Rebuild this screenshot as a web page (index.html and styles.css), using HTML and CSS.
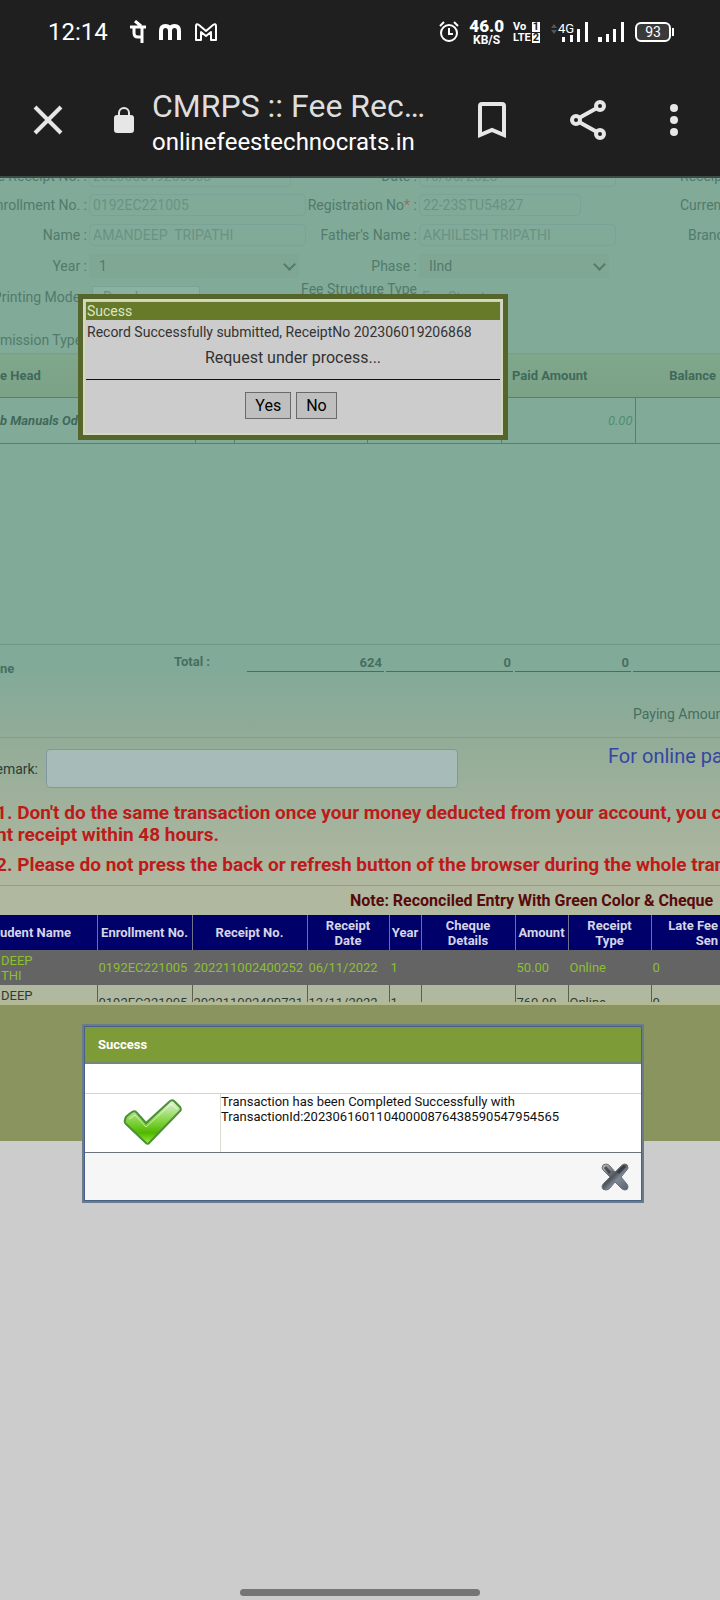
FILE: index.html
```
<!DOCTYPE html>
<html lang="en">
<head>
    <meta charset="UTF-8">
    <meta name="viewport" content="width=device-width, initial-scale=1.0">
    <title>CMRPS :: Fee Receipt</title>
    <link rel="stylesheet" href="styles.css">
</head>
<body>
<header class="browser">
    <div class="status">
        <span class="status__time">12:14</span>
        <svg class="status__app" width="16" height="24" viewBox="0 0 16 24" fill="none" stroke="#fff" stroke-width="3">
            <path d="M0 7h16M5 1l6 5M4 7v6q0 4 4 4h3M12 7v16"/>
        </svg>
        <svg class="status__app" width="24" height="24" viewBox="0 0 24 24" fill="none" stroke="#fff" stroke-width="4">
            <path d="M3 20v-9q0-5 4.500-5T12 11v9M12 11q0-5 4.500-5t4.500 5v9"/>
        </svg>
        <svg class="status__app" width="24" height="24" viewBox="0 0 24 24" fill="none" stroke="#fff" stroke-width="2" stroke-linejoin="round">
            <path d="M2 20V6q0-3 3-1l7 6 7-6q3-2 3 1v14h-5v-8l-5 4-5-4v8z"/>
        </svg>
        <div class="status__right">
            <svg width="22" height="24" viewBox="0 0 22 24" fill="none" stroke="#fff" stroke-width="2">
                <circle cx="11" cy="13" r="8"/>
                <path d="M11 8v6h4M2 6l4-4M20 6l-4-4"/>
            </svg>
            <div class="speed"><b>46.0</b><span>KB/S</span></div>
            <div class="volte">
                <span>Vo</span><i>1</i>
                <span>LTE</span><i>2</i>
            </div>
            <svg width="40" height="24" viewBox="0 0 40 24" fill="#fff">
                <path d="M2 8l3-4 3 4zM2 10l3 4 3-4z" fill="#555"/>
                <text x="9" y="13" class="svg-4g">4G</text>
                <path d="M13 17h3v5h-3zM21 15h3v7h-3zM28 9h3v13h-3zM36 2h3v20h-3z"/>
            </svg>
            <svg width="28" height="24" viewBox="0 0 28 24" fill="#fff">
                <path d="M0 17h4v5h-4zM8 14h3v8h-3zM15 9h3v13h-3zM23 2h3v20h-3z"/>
            </svg>
            <div class="battery">93</div>
        </div>
    </div>
    <div class="toolbar">
        <button type="button" class="icon-btn" aria-label="Close">
            <svg width="30" height="30" viewBox="0 0 30 30" stroke="#e6e6e6" stroke-width="4"><path d="M2 2l26 26M28 2L2 28"/></svg>
        </button>
        <svg class="toolbar__lock" width="20" height="28" viewBox="0 0 20 28">
            <rect y="9" width="20" height="18" rx="3" fill="#e6e6e6"/>
            <path d="M5 10V7a5 5 0 0 1 10 0v3" fill="none" stroke="#e6e6e6" stroke-width="2"/>
        </svg>
        <div class="toolbar__text">
            <div class="toolbar__title">CMRPS :: Fee Rec…</div>
            <div class="toolbar__url">onlinefeestechnocrats.in</div>
        </div>
        <button type="button" class="icon-btn" aria-label="Bookmark">
            <svg width="28" height="36" viewBox="0 0 28 36" fill="none" stroke="#e6e6e6" stroke-width="4"><path d="M2 33V4q0-2 2-2h20q2 0 2 2v29l-12-5z"/></svg>
        </button>
        <button type="button" class="icon-btn" aria-label="Share">
            <svg width="36" height="40" viewBox="0 0 36 40" fill="none" stroke="#e6e6e6" stroke-width="4">
                <path d="M9 18l18-10M9 22l18 10"/>
                <circle cx="6" cy="20" r="4"/><circle cx="30" cy="6" r="4"/><circle cx="30" cy="34" r="4"/>
            </svg>
        </button>
        <button type="button" class="icon-btn" aria-label="Menu">
            <svg width="8" height="32" viewBox="0 0 8 32" fill="#e6e6e6"><circle cx="4" cy="4" r="4"/><circle cx="4" cy="16" r="4"/><circle cx="4" cy="28" r="4"/></svg>
        </button>
    </div>
</header>

<main class="page">
    <div class="panel">
        <form class="fields">
            <label for="receipt">e Receipt No. :</label>
            <input type="text" id="receipt" class="w-receipt" value="202306019206868">
            <label for="date">Date :</label>
            <input type="text" id="date" value="16/06/2023">
            <span class="side">Receip</span>

            <label for="enrollment">nrollment No. :</label>
            <input type="text" id="enrollment" value="0192EC221005">
            <label for="registration">Registration No<em>*</em> :</label>
            <input type="text" id="registration" class="w-registration" value="22-23STU54827">
            <span class="side">Curren</span>

            <label for="name">Name :</label>
            <input type="text" id="name" value="AMANDEEP  TRIPATHI">
            <label for="father">Father's Name :</label>
            <input type="text" id="father" value="AKHILESH TRIPATHI">
            <span class="side side--branch">Branc</span>

            <label for="year">Year :</label>
            <div class="select"><select id="year"><option>1</option></select></div>
            <label for="phase">Phase :</label>
            <div class="select"><select id="phase"><option>IInd</option></select></div>
            <span></span>

            <label for="mode">Printing Mode :</label>
            <input type="text" id="mode" class="w-mode" value="Regular">
            <label for="structure">Fee Structure Type :</label>
            <input type="text" id="structure" class="plain" value="Fee Structure">
            <span></span>

            <span class="admission">mission Type :</span>
        </form>

        <table class="fees">
            <colgroup><col class="f1"><col class="f2"><col class="f3"><col class="f4"><col class="f4"><col></colgroup>
            <thead>
                <tr><th>e Head</th><th></th><th></th><th></th><th class="paid">Paid Amount</th><th class="balance">Balance</th></tr>
            </thead>
            <tbody>
                <tr><td><b>b Manuals Od</b></td><td></td><td></td><td></td><td class="num">0.00</td><td></td></tr>
            </tbody>
        </table>

        <div class="totals">
            <span class="totals__mode">ne</span>
            <label for="total">Total :</label>
            <input type="text" id="total" value="624" readonly>
            <input type="text" aria-label="Paid" value="0" readonly>
            <input type="text" aria-label="Balance" value="0" readonly>
            <input type="text" aria-label="Due" readonly>
        </div>
        <div class="paying">Paying Amoun</div>

        <div class="remark">
            <label for="remark">emark:</label>
            <textarea id="remark"></textarea>
            <a href="#" class="remark__link">For online pay</a>
        </div>

        <div class="warn">
            <p>1. Don't do the same transaction once your money deducted from your account, you ca</p>
            <p class="warn__next">nt receipt within 48 hours.</p>
            <p>2. Please do not press the back or refresh button of the browser during the whole tran</p>
        </div>

        <div class="note">Note: Reconciled Entry With Green Color &amp; Cheque</div>
        <div class="history-wrap">
            <table class="history">
                <colgroup><col class="h1"><col class="h2"><col class="h3"><col class="h4"><col class="h5"><col class="h6"><col class="h7"><col class="h8"><col></colgroup>
                <thead>
                    <tr><th class="student">udent Name</th><th>Enrollment No.</th><th>Receipt No.</th><th>Receipt<br>Date</th><th>Year</th><th>Cheque<br>Details</th><th>Amount</th><th>Receipt<br>Type</th><th class="late">Late Fee<br>Sen</th></tr>
                </thead>
                <tbody>
                    <tr class="reconciled"><td>DEEP<br>THI</td><td>0192EC221005</td><td>202211002400252</td><td>06/11/2022</td><td>1</td><td></td><td>50.00</td><td>Online</td><td>0</td></tr>
                    <tr><td>DEEP<br>THI</td><td>0192EC221005</td><td>202211002400721</td><td>12/11/2022</td><td>1</td><td></td><td>760.00</td><td>Online</td><td>0</td></tr>
                </tbody>
            </table>
        </div>
    </div>
    <div class="footer"></div>

    <div class="confirm">
        <div class="confirm__title">Sucess</div>
        <div class="confirm__text">Record Successfully submitted, ReceiptNo 202306019206868</div>
        <div class="confirm__wait">Request under process...</div>
        <div class="confirm__buttons">
            <button type="button">Yes</button>
            <button type="button">No</button>
        </div>
    </div>

    <div class="success">
        <div class="success__title">Success</div>
        <div class="success__gap"></div>
        <div class="success__body">
            <div class="success__icon">
                <svg width="60" height="46" viewBox="0 0 60 46">
                    <defs>
                        <linearGradient id="tick" x1="0" y1="0" x2="0" y2="1">
                            <stop offset="0" stop-color="#e4f5dc"/>
                            <stop offset="0.5" stop-color="#7fd23c"/>
                            <stop offset="0.75" stop-color="#50b800"/>
                            <stop offset="1" stop-color="#9af03a"/>
                        </linearGradient>
                    </defs>
                    <path d="M2 21q0-3 3-5l4-3q3-2 5 1l9 10L46 3q3-3 5-1l6 6q2 3-1 5L27 43q-2 3-4 1L3 25q-2-2-1-4z" fill="url(#tick)" stroke="#4c8f38" stroke-width="2"/>
                    <path d="M6 20l6-4 11 12L48 5l6 5" fill="none" stroke="#fff" stroke-width="1" opacity="0.6"/>
                </svg>
            </div>
            <div class="success__text">Transaction has been Completed Successfully with<br>TransactionId:20230616011040000876438590547954565</div>
        </div>
        <div class="success__foot">
            <button type="button" aria-label="Close">
                <svg width="28" height="28" viewBox="0 0 28 28">
                    <defs>
                        <linearGradient id="cross" x1="0" y1="0" x2="1" y2="1">
                            <stop offset="0" stop-color="#c3c6c9"/>
                            <stop offset="0.45" stop-color="#4d545c"/>
                            <stop offset="0.6" stop-color="#7f8a96"/>
                            <stop offset="1" stop-color="#5a626b"/>
                        </linearGradient>
                    </defs>
                    <path d="M1 5q0-4 4-4 2 0 4 2l5 6 6-6q2-2 4-2 3 0 3 4 0 1-2 3l-5 6 5 6q2 2 2 4 0 3-3 3-2 0-4-2l-6-6-5 6q-2 2-4 2-4 0-4-3 0-2 2-4l6-6-6-6Q1 6 1 5z" fill="url(#cross)" stroke="#6b7076"/>
                    <path d="M17 10l7-7M4 4l5 6" fill="none" stroke="#22262c" stroke-width="3" opacity="0.6"/>
                </svg>
            </button>
        </div>
    </div>
</main>
<div class="home-bar"></div>
</body>
</html>
```
FILE: styles.css
```
* {
    box-sizing: border-box;
}

body {
    margin: 0;
    min-height: 100vh;
    display: flex;
    flex-direction: column;
    overflow-x: hidden;
    background-color: #ccc;
    color: #2c3c36;
    font-family: Roboto, sans-serif;
    font-size: 14px;
}

input,
select,
textarea,
button {
    font-family: inherit;
    font-size: inherit;
}

/* Phone status bar and browser toolbar */
.browser {
    background-color: #1f1f1f;
    color: #fff;
    border-bottom: 2px solid #3d4a45;
}

.status {
    height: 64px;
    padding: 0 49px 0 48px;
    display: flex;
    align-items: center;
}

.status__time {
    font-size: 24px;
    margin-right: 10px;
}

.status__app {
    margin-left: 12px;
}

.status__right {
    margin-left: auto;
    display: flex;
    align-items: center;
    gap: 9px;
}

.speed {
    display: flex;
    flex-direction: column;
    align-items: center;
    font-size: 12px;
    line-height: 12px;
    font-weight: bold;
}

.speed b {
    font-size: 17px;
    line-height: 16px;
}

.volte {
    display: grid;
    grid-template-columns: 19px 8px;
    font-size: 11px;
    line-height: 10px;
    font-weight: bold;
    row-gap: 1px;
}

.volte i {
    background-color: #fff;
    color: #1f1f1f;
    font-style: normal;
    text-align: center;
}

.svg-4g {
    font-size: 13px;
}

.battery {
    position: relative;
    width: 36px;
    height: 20px;
    border: 2px solid #fff;
    border-radius: 6px;
    background-color: #3a3a3a;
    text-align: center;
    line-height: 16px;
}

.battery::after {
    content: "";
    position: absolute;
    top: 4px;
    right: -5px;
    width: 2px;
    height: 8px;
    background-color: #fff;
}

.toolbar {
    height: 112px;
    padding: 0 42px 0 33px;
    display: flex;
    align-items: center;
}

.toolbar__lock {
    margin: 0 18px 0 51px;
}

.toolbar__text {
    flex: 1;
    min-width: 0;
    padding-top: 5px;
    white-space: nowrap;
}

.toolbar__title {
    color: #dedede;
    font-size: 32px;
    line-height: 38px;
}

.toolbar__url {
    font-size: 24px;
    line-height: 34px;
}

.icon-btn {
    display: flex;
    padding: 0;
    border: none;
    background: none;
}

.icon-btn + .icon-btn {
    margin-left: 64px;
}

/* Fee receipt page behind the dialogs */
.page {
    position: relative;
    flex: 1;
    overflow: hidden;
}

.panel {
    overflow: hidden;
    background: linear-gradient(#82aa98 0, #82aa98 490px, #92ac98 560px, #b1b8a0 710px);
    border-bottom: 3px solid #b1b892;
}

.fields {
    margin-top: -16px;
    display: grid;
    grid-template-columns: 89px 217px 113px 197px 1fr;
    grid-template-rows: 28px 30px 29px 34px 28px 42px;
    align-items: center;
    color: #517b6b;
    white-space: nowrap;
}

.fields label {
    display: flex;
    justify-content: flex-end;
    padding-right: 2px;
    white-space: pre;
}

.fields em {
    color: #a3695f;
    font-style: normal;
}

.fields label[for="structure"] {
    display: block;
    white-space: normal;
    text-align: right;
    line-height: 16px;
    margin-left: -8px;
}

.fields input {
    width: 100%;
    height: 22px;
    padding: 0 3px;
    border: 1px solid #7aa297;
    border-radius: 5px;
    background-color: transparent;
    color: #6a9284;
}

.fields input.w-receipt {
    width: 202px;
}

.fields input.w-registration {
    width: 162px;
}

.fields input.w-mode {
    width: 108px;
    margin-left: 3px;
    padding: 0 10px;
    border-radius: 2px;
    background-color: #8bb1a2;
}

.fields input.plain {
    border: none;
}

.select {
    position: relative;
    margin-right: 7px;
}

.select select {
    width: 100%;
    height: 24px;
    padding: 0 10px;
    border: none;
    background-color: #7fa794;
    color: #517b6b;
    appearance: none;
}

.select::after {
    content: "";
    position: absolute;
    right: 5px;
    top: 6px;
    width: 7px;
    height: 7px;
    border: solid #517b6b;
    border-width: 0 2px 2px 0;
    transform: rotate(45deg);
}

.side {
    padding-left: 64px;
}

.side--branch {
    padding-left: 72px;
}

.admission {
    padding-top: 16px;
    display: flex;
    justify-content: flex-end;
}

.fees {
    width: 100%;
    table-layout: fixed;
    border-collapse: collapse;
    color: #3f695a;
    border-top: 1px solid #769f8c;
    font-size: 13px;
    white-space: nowrap;
}

.f1 { width: 195px; }
.f2 { width: 39px; }
.f3 { width: 133px; }
.f4 { width: 134px; }

.fees th {
    height: 44px;
    padding: 0;
    text-align: left;
    background: linear-gradient(#7fa78c, #7ba186);
    border-bottom: 1px solid #56806f;
}

.fees th.paid {
    padding-left: 11px;
}

.fees th.balance {
    padding-right: 4px;
    text-align: right;
}

.fees td {
    height: 46px;
    padding: 0 2px 0 0;
    font-style: italic;
    border-right: 1px solid #56806f;
    border-bottom: 1px solid #56806f;
}

.fees td:last-child {
    border-right: none;
}

.fees td.num {
    text-align: right;
    color: #4f8f72;
}

.totals {
    margin-top: 200px;
    border-top: 1px solid #6f9987;
    padding-top: 8px;
    display: grid;
    grid-template-columns: 172px 71px 137px 127px 116px 1fr;
    column-gap: 2px;
    font-size: 13px;
    color: #456f60;
    font-weight: bold;
}

.totals__mode {
    padding-top: 8px;
}

.totals label {
    line-height: 18px;
}

.totals input {
    min-width: 0;
    height: 19px;
    padding: 0 2px;
    border: none;
    border-bottom: 1px solid #456f60;
    background: none;
    color: inherit;
    font-weight: bold;
    text-align: right;
}

.paying {
    height: 61px;
    padding: 30px 0 0 633px;
    color: #456f60;
    white-space: nowrap;
}

.remark {
    border-top: 1px solid #7f9d8c;
    height: 62px;
    display: flex;
    align-items: center;
    white-space: nowrap;
}

.remark label {
    width: 38px;
    display: flex;
    justify-content: flex-end;
}

.remark textarea {
    flex-shrink: 0;
    width: 412px;
    height: 39px;
    margin-left: 8px;
    border: 1px solid #8298a0;
    border-radius: 4px;
    background-color: #a7bbb8;
    resize: none;
}

.remark__link {
    align-self: flex-start;
    margin: 6px 0 0 150px;
    color: #3545a4;
    font-size: 20px;
    line-height: 24px;
    text-decoration: none;
}

.warn {
    margin-left: -4px;
    padding-top: 3px;
    height: 86px;
    color: #bd1a1a;
    font-size: 19px;
    line-height: 22px;
    font-weight: bold;
    white-space: nowrap;
}

.warn p {
    margin: 0;
}

.warn .warn__next {
    margin-bottom: 8px;
}

.note {
    border-top: 1px solid #949e8c;
    padding-left: 350px;
    color: #570b0b;
    font-size: 16px;
    line-height: 29px;
    font-weight: bold;
    white-space: nowrap;
}

.history-wrap {
    height: 87px;
    overflow: hidden;
}

.history {
    width: 100%;
    table-layout: fixed;
    border-collapse: collapse;
    font-size: 13px;
    line-height: 15px;
    white-space: nowrap;
}

.h1 { width: 97px; }
.h2 { width: 95px; }
.h3 { width: 115px; }
.h4 { width: 82px; }
.h5 { width: 32px; }
.h6 { width: 94px; }
.h7 { width: 53px; }
.h8 { width: 83px; }

.history th {
    height: 35px;
    padding: 0;
    background-color: #00006a;
    color: #d5d5e6;
    border-right: 1px solid #72728c;
}

.history th.student {
    text-align: left;
}

.history th.late {
    padding-right: 2px;
    text-align: right;
}

.history td {
    height: 35px;
    padding: 0 1px;
    border-right: 1px solid #59604f;
}

.history th:last-child,
.history td:last-child {
    border-right: none;
}

.history .reconciled td {
    background-color: #646464;
    color: #8dbf33;
    border-color: #646464;
}

.footer {
    height: 136px;
    background-color: #8a945f;
}

/* Receipt dialog */
.confirm {
    position: absolute;
    top: 116px;
    left: 78px;
    width: 430px;
    height: 146px;
    padding: 3px;
    border: 5px solid #55652b;
    background-color: #ccc;
    box-shadow: inset 0 0 0 2px #d3d9bd;
    color: #333;
}

.confirm__title {
    padding-left: 1px;
    background-color: #667a2a;
    color: #dfe5c4;
    line-height: 18px;
}

.confirm__text {
    padding-left: 1px;
    line-height: 24px;
}

.confirm__wait {
    padding-bottom: 7px;
    border-bottom: 1px solid #111;
    font-size: 16px;
    line-height: 28px;
    text-align: center;
}

.confirm__buttons {
    padding: 12px 4px 0 0;
    display: flex;
    justify-content: center;
    gap: 5px;
}

.confirm__buttons button {
    height: 27px;
    padding: 0 9px;
    border: 1px solid #6a6a6a;
    background-color: #bfbfbf;
    color: #000;
    font-size: 16px;
}

/* Transaction dialog */
.success {
    position: absolute;
    top: 846px;
    left: 82px;
    width: 562px;
    border: 3px solid #6b7b87;
    outline: 1px solid #46608a;
    outline-offset: -3px;
    background-color: #fff;
    color: #111;
}

.success__title {
    padding-left: 13px;
    background-color: #7d9b37;
    border-bottom: 2px solid #74877f;
    color: #fff;
    font-size: 13px;
    line-height: 35px;
    font-weight: bold;
}

.success__gap {
    height: 29px;
}

.success__body {
    height: 60px;
    display: flex;
    border-top: 1px solid #d0d4cc;
    border-bottom: 1px solid #6b747c;
}

.success__icon {
    width: 136px;
    padding-top: 5px;
    display: flex;
    justify-content: center;
    align-items: flex-start;
    border-right: 1px solid #dcdccc;
}

.success__text {
    font-size: 13px;
    line-height: 15px;
}

.success__foot {
    height: 47px;
    padding-right: 12px;
    display: flex;
    justify-content: flex-end;
    align-items: center;
    background-color: #f6f6f6;
}

.success__foot button {
    display: flex;
    padding: 0;
    border: none;
    background: none;
}

.home-bar {
    width: 240px;
    height: 7px;
    margin: 0 auto 4px;
    border-radius: 4px;
    background-color: #757575;
}
```
